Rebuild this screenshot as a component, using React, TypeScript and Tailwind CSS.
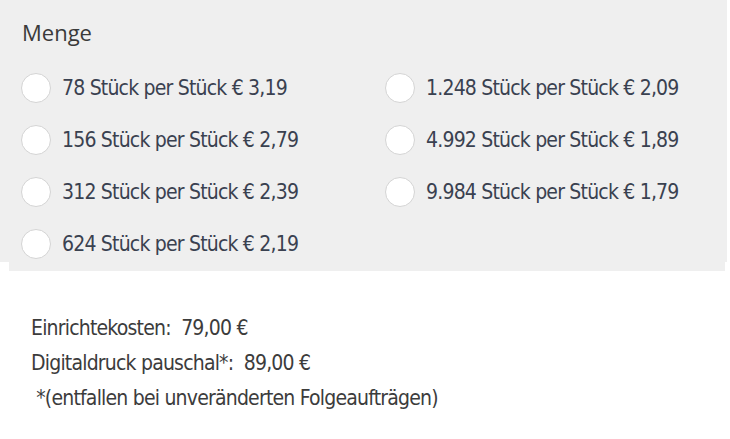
const options = [
  ['78 Stück per Stück € 3,19', '1.248 Stück per Stück € 2,09'],
  ['156 Stück per Stück € 2,79', '4.992 Stück per Stück € 1,89'],
  ['312 Stück per Stück € 2,39', '9.984 Stück per Stück € 1,79'],
  ['624 Stück per Stück € 2,19', null],
];

function Option({ label }: { label: string }) {
  return (
    <label className="flex h-[52px] items-center gap-[11px]">
      <span className="h-[30px] w-[30px] shrink-0 rounded-full border border-[#d4d4d4] bg-white" />
      <span className="whitespace-nowrap text-[21px] leading-none tracking-[-0.8px] text-[#3a4150]">{label}</span>
    </label>
  );
}

export default function App() {
  return (
    <div
      className="h-[439px] w-[730px] bg-white font-stretch-condensed"
      style={{ fontFamily: '"DejaVu Sans", sans-serif' }}
    >
      <div className="h-[262px] w-[727px] bg-[#efefef] pl-[22px] pt-[18px]">
        <h2
          className="text-[22px] leading-[28px] font-normal text-[#3a3a3a] font-stretch-normal"
          style={{ fontFamily: '"Open Sans", sans-serif' }}
        >
          Menge
        </h2>
        <div className="-ml-px mt-[16px] grid grid-cols-[364px_1fr]">
          {options.map((row, i) =>
            row.map((label, j) =>
              label ? <Option key={`${i}-${j}`} label={label} /> : <div key={`${i}-${j}`} />,
            ),
          )}
        </div>
      </div>
      <div className="ml-[9px] h-[9px] w-[716px] bg-[#efefef]" />

      <div className="mt-[40px] whitespace-nowrap pl-[31px] text-[21px] leading-[35px] tracking-[-0.8px] text-[#3c3c3c]">
        <p>Einrichtekosten:&nbsp; 79,00 €</p>
        <p>Digitaldruck pauschal*:&nbsp; 89,00 €</p>
        <p>&nbsp;*(entfallen bei unveränderten Folgeaufträgen)</p>
      </div>
    </div>
  );
}
